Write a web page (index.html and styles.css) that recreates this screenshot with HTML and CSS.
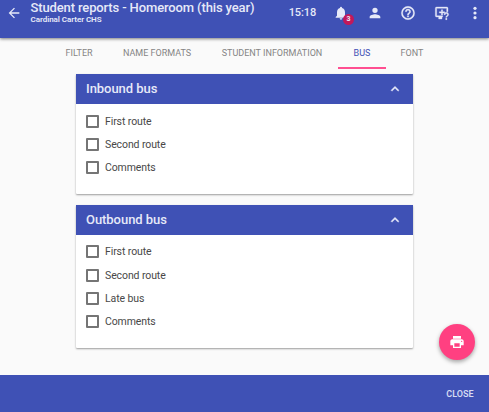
FILE: index.html
```html
<!DOCTYPE html>
<html lang="en">
<head>
<meta charset="utf-8">
<title>Student reports</title>
<link rel="stylesheet" href="styles.css">
</head>
<body>
<header class="toolbar">
  <svg class="icon" viewBox="0 0 24 24"><path d="M20 11H7.83l5.59-5.59L12 4l-8 8 8 8 1.41-1.41L7.83 13H20z"/></svg>
  <div class="titles">
    <h1>Student reports - Homeroom (this year)</h1>
    <p>Cardinal Carter CHS</p>
  </div>
  <div class="actions">
    <time>15:18</time>
    <div class="bell">
      <svg class="icon" viewBox="0 0 24 24"><path d="M12 22c1.1 0 2-.9 2-2h-4c0 1.1.9 2 2 2zm6-6v-5c0-3.07-1.64-5.64-4.5-6.32V4a1.5 1.5 0 0 0-3 0v.68C7.63 5.36 6 7.92 6 11v5l-2 2v1h16v-1z"/></svg>
      <span class="badge">3</span>
    </div>
    <svg class="icon" viewBox="0 0 24 24"><path d="M12 12a4 4 0 1 0 0-8 4 4 0 0 0 0 8zm0 2c-2.67 0-8 1.34-8 4v2h16v-2c0-2.66-5.33-4-8-4z"/></svg>
    <svg class="icon outlined" viewBox="0 0 24 24"><path d="M11 18h2v-2h-2zm1-16a10 10 0 1 0 0 20 10 10 0 0 0 0-20zm0 18a8 8 0 1 1 0-16 8 8 0 0 1 0 16zm0-14a4 4 0 0 0-4 4h2a2 2 0 1 1 4 0c0 2-3 1.750-3 5h2c0-2.250 3-2.500 3-5a4 4 0 0 0-4-4z"/></svg>
    <svg class="icon outlined" viewBox="0 0 24 24"><path d="M4 3h15a2 2 0 0 1 2 2v5h-2V5H4v11h9v2h-1v3H7v-3H4a2 2 0 0 1-2-2V5a2 2 0 0 1 2-2zm7 4h2v3h3v2h-3v3h-2v-3H8v-2h3zm6.500 13h2v2h-2zm1-9a3.500 3.500 0 0 0-3.500 3.500h1.800a1.700 1.700 0 1 1 3.400 0c0 1.500-2.600 1.500-2.600 4h1.800c0-1.900 2.600-2.200 2.600-4A3.500 3.500 0 0 0 18.500 11z"/></svg>
    <svg class="icon" viewBox="0 0 24 24"><circle cx="12" cy="5" r="2.400"/><circle cx="12" cy="12" r="2.400"/><circle cx="12" cy="19" r="2.400"/></svg>
  </div>
</header>
<nav class="tabs">
  <a class="tab filter">FILTER</a>
  <a class="tab names">NAME FORMATS</a>
  <a class="tab info">STUDENT INFORMATION</a>
  <a class="tab bus active">BUS</a>
  <a class="tab font">FONT</a>
</nav>
<main>
  <section class="card inbound">
    <h2>Inbound bus<svg class="icon outlined" viewBox="0 0 24 24"><path d="M12 8l-6 6 1.410 1.410L12 10.830l4.590 4.580L18 14z"/></svg></h2>
    <div class="options">
      <label><i class="box"></i>First route</label>
      <label><i class="box"></i>Second route</label>
      <label><i class="box"></i>Comments</label>
    </div>
  </section>
  <section class="card outbound">
    <h2>Outbound bus<svg class="icon outlined" viewBox="0 0 24 24"><path d="M12 8l-6 6 1.410 1.410L12 10.830l4.590 4.580L18 14z"/></svg></h2>
    <div class="options">
      <label><i class="box"></i>First route</label>
      <label><i class="box"></i>Second route</label>
      <label><i class="box"></i>Late bus</label>
      <label><i class="box"></i>Comments</label>
    </div>
  </section>
</main>
<div class="fab"><svg class="icon" viewBox="0 0 24 24"><path d="M19 8H5c-1.660 0-3 1.340-3 3v6h4v4h12v-4h4v-6c0-1.660-1.340-3-3-3zm-3 11H8v-5h8zm3-7a1 1 0 1 1 0-2 1 1 0 0 1 0 2zM18 3H6v4h12z"/></svg></div>
<footer class="footer"><span>CLOSE</span></footer>
</body>
</html>
```
FILE: styles.css
```css
* { box-sizing: border-box; }
body {
  margin: 0;
  width: 489px;
  height: 412px;
  display: flex;
  flex-direction: column;
  overflow: hidden;
  background: #fafafa;
  font-family: Roboto, sans-serif;
}
h1, h2, p { margin: 0; }
.icon { display: block; flex: none; width: 16px; height: 16px; fill: currentColor; }
.outlined { stroke: currentColor; stroke-width: .5; }

.toolbar {
  flex: none;
  display: flex;
  align-items: flex-start;
  height: 37.5px;
  padding: 0 6px;
  background: #3f51b5;
  color: #e6e9f8;
  box-shadow: 0 1px 3px rgba(0, 0, 0, .5);
}
.toolbar > .icon { margin-top: 4.5px; }
.titles { margin-left: 8.5px; white-space: nowrap; }
.titles h1 { font-size: 13px; line-height: 15px; font-weight: 500; letter-spacing: -.13px; }
.titles p { font-size: 8px; line-height: 9px; font-weight: 600; letter-spacing: -.05px; }
.actions {
  display: flex;
  align-items: center;
  gap: 17.4px;
  height: 16px;
  margin-top: 4.5px;
  margin-left: auto;
}
.actions time { font-size: 11px; line-height: 16px; font-weight: 500; letter-spacing: -.1px; }
.bell { position: relative; }
.badge {
  position: absolute;
  left: 9.5px;
  top: 9px;
  width: 11px;
  height: 11px;
  border-radius: 50%;
  background: #c2185b;
  font-size: 7px;
  line-height: 11px;
  font-weight: 700;
  text-align: center;
}

.tabs {
  flex: none;
  display: flex;
  height: 31.5px;
  padding-left: 50px;
  color: #858585;
  font-size: 9px;
  line-height: 31px;
  white-space: nowrap;
}
.tab { text-align: center; }
.filter { width: 58px; }
.names { width: 98px; }
.info { width: 132px; }
.bus { width: 48px; }
.font { width: 52px; }
.active { color: #3f51b5; border-bottom: 2px solid #ff4f91; }

main { flex: 1; padding: 4.5px 76px 0; }
.card {
  background: #fff;
  border-radius: 1px;
  box-shadow: 0 1px 2px rgba(0, 0, 0, .38);
}
.inbound { height: 120.5px; margin-bottom: 11px; }
.outbound { height: 143px; }
.card h2 {
  display: flex;
  justify-content: space-between;
  align-items: center;
  height: 30.5px;
  padding: 0 10px;
  background: #3f51b5;
  color: #e6e9f8;
  font-size: 13px;
  font-weight: 500;
  letter-spacing: -.05px;
}
.outbound h2 { height: 29.9px; }
.options { padding-top: 6px; }
.outbound .options { padding-top: 5.4px; }
.options label {
  display: flex;
  align-items: center;
  height: 23.2px;
  padding-left: 9.5px;
  color: #484848;
  font-size: 10.5px;
  letter-spacing: -.1px;
}
.box {
  width: 13px;
  height: 13px;
  margin-right: 6.5px;
  border: 2px solid #757575;
  border-radius: 1px;
}

.fab {
  position: absolute;
  left: 439px;
  top: 324px;
  display: grid;
  place-items: center;
  width: 36px;
  height: 36px;
  border-radius: 50%;
  background: #ff4081;
  color: #fff;
  box-shadow: 0 2px 4px rgba(0, 0, 0, .35);
}
.footer {
  flex: none;
  display: flex;
  justify-content: flex-end;
  align-items: center;
  height: 37.5px;
  padding: 2px 15.5px 0 0;
  background: #3f51b5;
  color: #d5daf2;
  font-size: 9px;
  font-weight: 600;
}
```
